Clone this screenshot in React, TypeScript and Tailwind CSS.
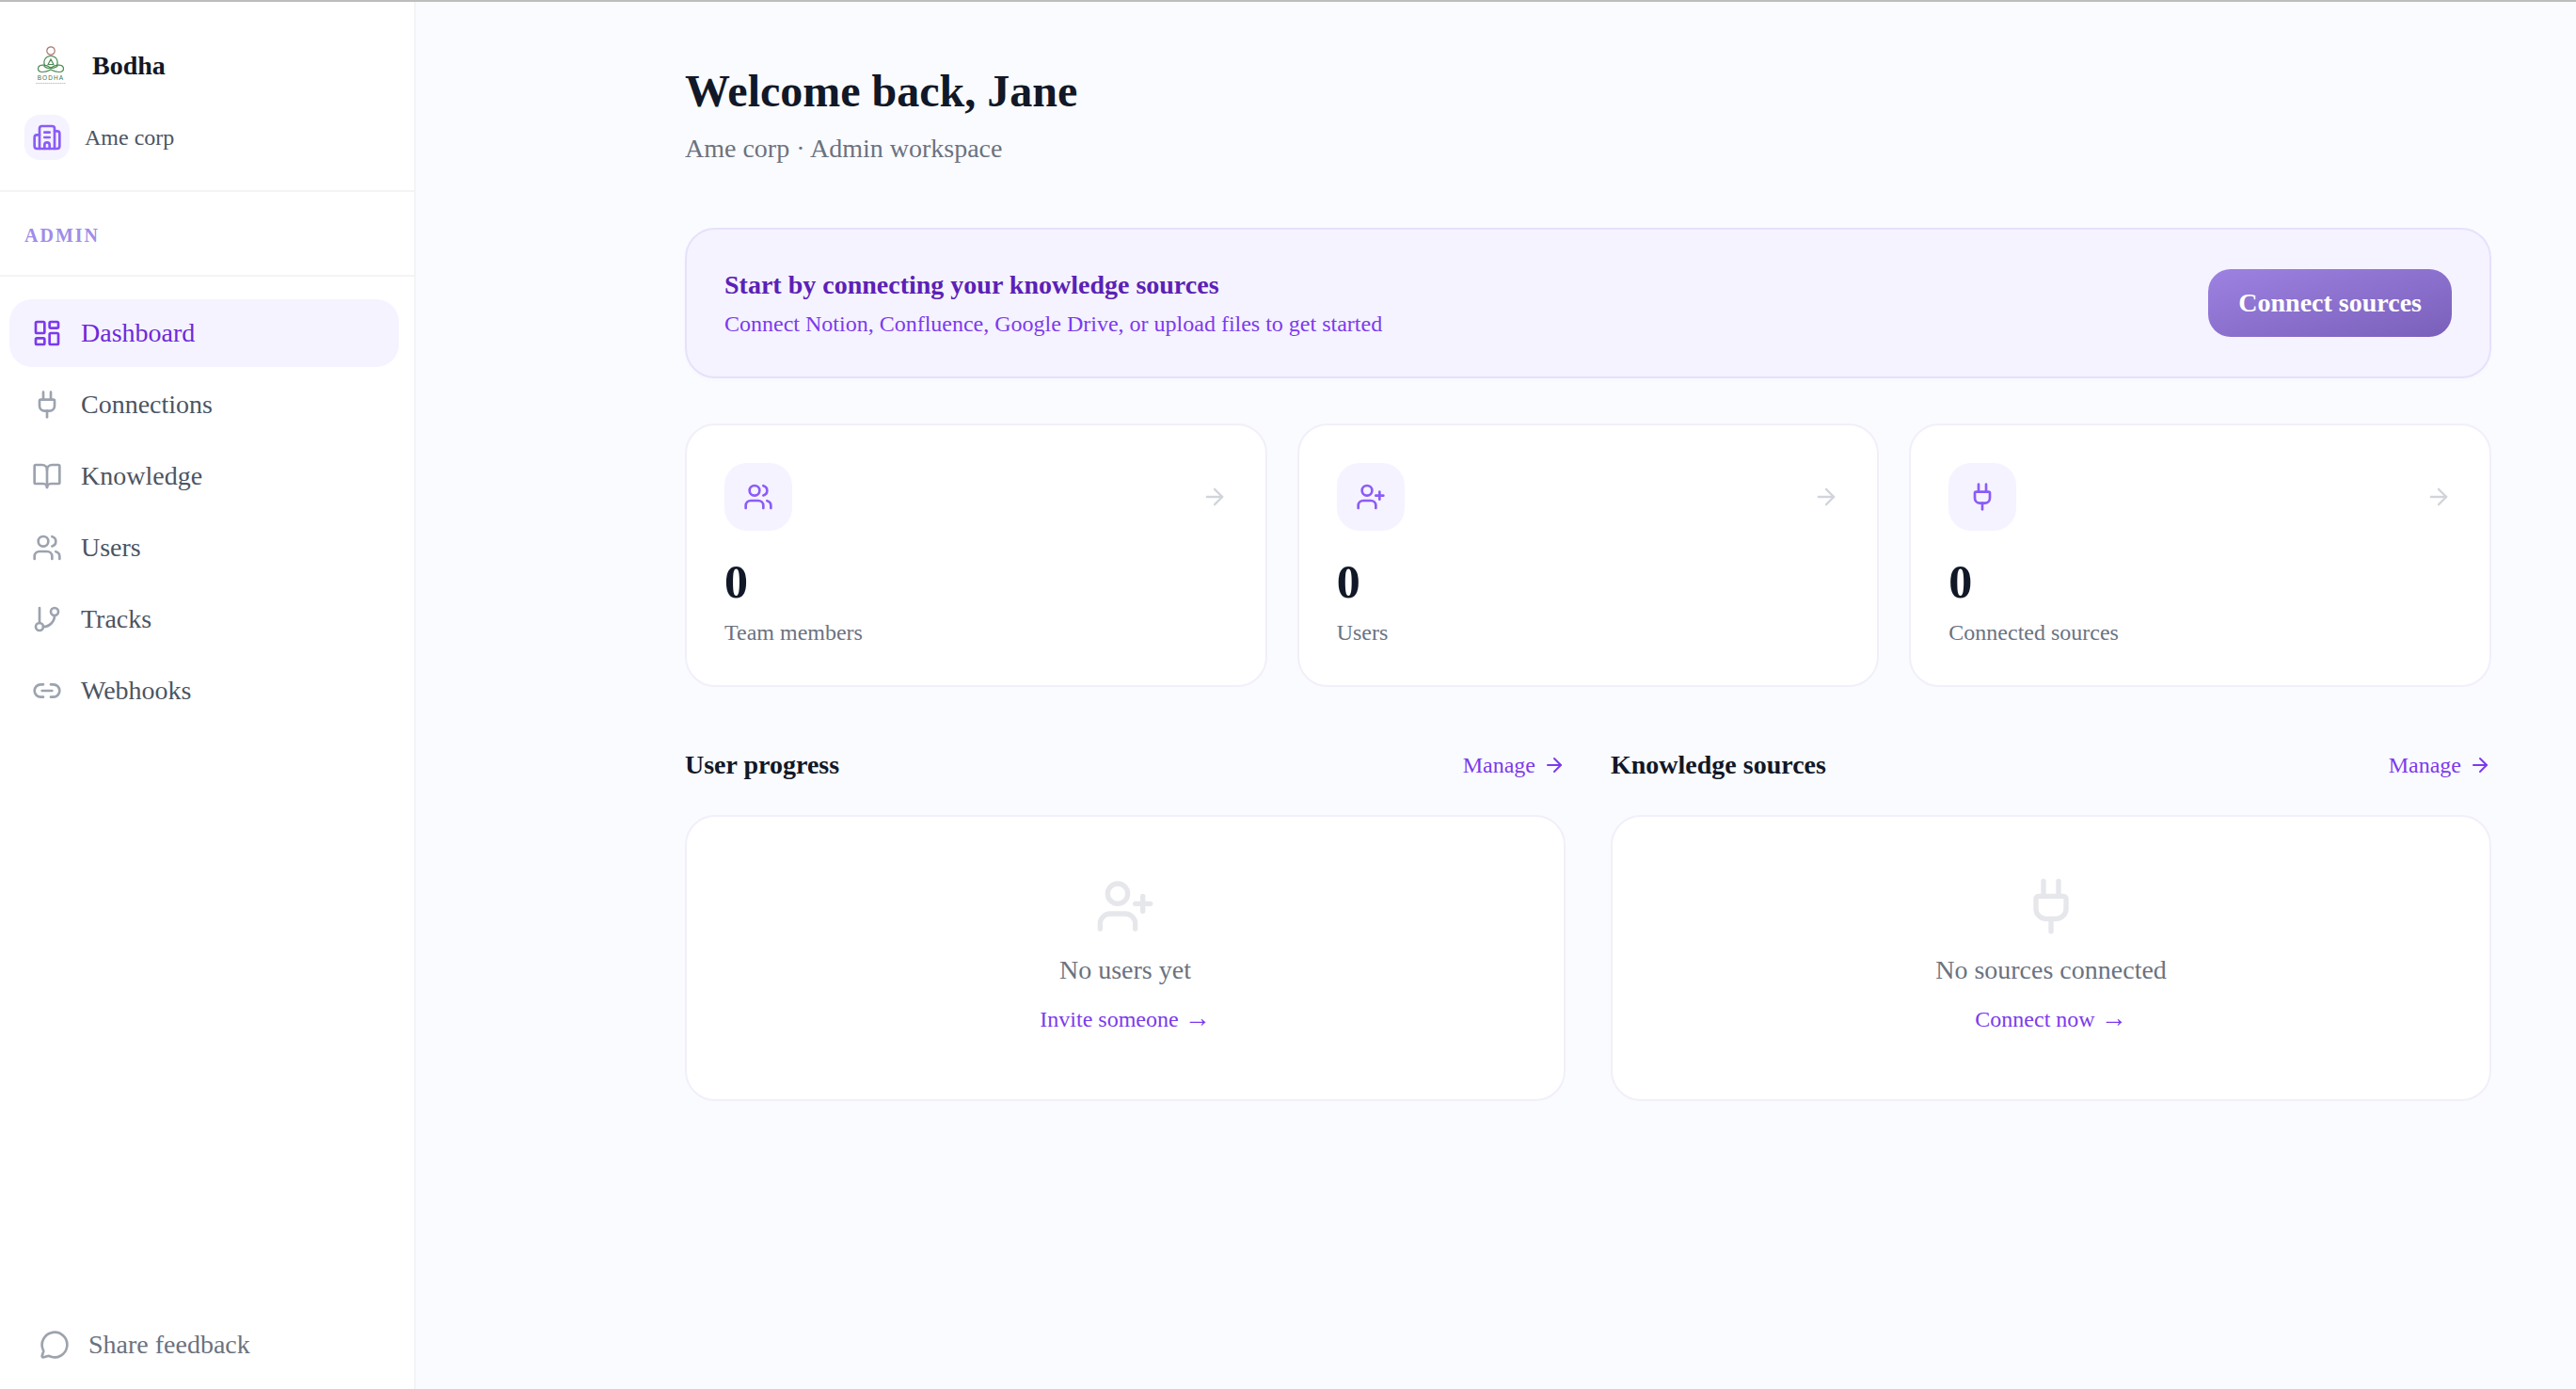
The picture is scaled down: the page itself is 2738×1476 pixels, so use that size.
import React from "react";
import {
  ArrowRight,
  BookOpen,
  Building2,
  GitBranch,
  LayoutDashboard,
  Link2,
  MessageCircle,
  Plug,
  UserPlus,
  Users,
} from "lucide-react";

const navItems = [
  { label: "Dashboard", icon: LayoutDashboard, active: true },
  { label: "Connections", icon: Plug },
  { label: "Knowledge", icon: BookOpen },
  { label: "Users", icon: Users },
  { label: "Tracks", icon: GitBranch },
  { label: "Webhooks", icon: Link2 },
];

const stats = [
  { label: "Team members", icon: Users },
  { label: "Users", icon: UserPlus },
  { label: "Connected sources", icon: Plug },
];

const panels = [
  { title: "User progress", empty: "No users yet", action: "Invite someone", icon: UserPlus },
  { title: "Knowledge sources", empty: "No sources connected", action: "Connect now", icon: Plug },
];

const BodhaLogo = () => (
  <svg width="36" height="44" viewBox="0 0 36 44" fill="none">
    <circle cx="18" cy="6" r="4.2" stroke="#a9726e" strokeWidth="1.200" />
    <g stroke="#4a8a50" strokeWidth="1.200" strokeLinecap="round">
      <path d="M11.5 21.5C9.5 15.5 13 11.5 18 11.5s8.500 4 6.500 10" />
      <path d="M15 20.500l3-5.500 3 5.500M15.500 20.500h5" />
      <path d="M18 24C12 19.500 4.500 20.500 4.500 25c0 4.500 7 4.500 13.500 1 6.500 3.500 13.500 3.500 13.500-1 0-4.500-7.500-5.500-13.500-1Z" />
      <path d="M11 22.500c3 3 9 3 14 0" />
    </g>
    <text x="18" y="37" textAnchor="middle" fontSize="6.500" letterSpacing="1.100" fill="#3f7247" fontFamily="'Liberation Sans', sans-serif">
      BODHA
    </text>
    <path d="M2 40.500h32" stroke="#9db39f" strokeWidth="0.700" strokeDasharray="1.500 0.500" />
  </svg>
);

const Sidebar = () => (
  <aside className="flex w-[442px] shrink-0 flex-col border-r-2 border-[#f3f4f6] bg-white">
    <div className="border-b-2 border-[#f3f4f6] pt-[44px] pb-[32px]">
      <div className="flex items-center gap-[20px] pl-[30px]">
        <div className="flex h-[48px] w-[48px] items-center justify-center">
          <BodhaLogo />
        </div>
        <span className="text-[28px] font-bold text-[#111827]">Bodha</span>
      </div>
      <div className="mt-[28px] flex items-center gap-[16px] pl-[26px]">
        <div className="flex h-[48px] w-[48px] items-center justify-center rounded-[16px] bg-[#f5f3ff]">
          <Building2 size={32} className="text-[#8b5cf6]" />
        </div>
        <span className="text-[24px] text-[#4b5563]">Ame corp</span>
      </div>
    </div>

    <div className="flex h-[90px] items-center border-b-2 border-[#f3f4f6] pt-[4px] pl-[26px]">
      <span className="text-[20px] font-bold tracking-[0.1em] text-[#a08ce8]">ADMIN</span>
    </div>

    <nav className="flex flex-col gap-[4px] pt-[24px] pr-[16px] pl-[10px]">
      {navItems.map((item) => (
        <div
          key={item.label}
          className={
            item.active
              ? "flex h-[72px] items-center gap-[20px] rounded-[24px] bg-[#f5f3ff] pl-[24px] text-[#6d28d9]"
              : "flex h-[72px] items-center gap-[20px] rounded-[24px] pl-[24px] text-[#4b5563]"
          }
        >
          <item.icon size={32} className={item.active ? "text-[#7c3aed]" : "text-[#9ca3af]"} />
          <span className="text-[28px]">{item.label}</span>
        </div>
      ))}
    </nav>

    <div className="mt-auto flex items-center gap-[20px] pb-[26px] pl-[42px]">
      <MessageCircle size={32} className="text-[#9ca3af]" />
      <span className="text-[28px] text-[#6b7280]">Share feedback</span>
    </div>
  </aside>
);

export default function App() {
  return (
    <div className="flex h-screen flex-col overflow-hidden bg-[#fafbfe] font-['Liberation_Serif',serif]">
      <div className="h-[2px] shrink-0 bg-[#bdbdbd]" />
      <div className="flex min-h-0 flex-1">
        <Sidebar />
        <main className="flex-1 pt-[64px] pr-[90px] pl-[286px]">
          <h1 className="text-[48px] leading-[62px] font-bold text-[#111827]">Welcome back, Jane</h1>
          <p className="mt-[9px] text-[28px] leading-[42px] text-[#6b7280]">Ame corp · Admin workspace</p>

          <section className="mt-[63px] flex h-[160px] items-center justify-between rounded-[32px] border-2 border-[#e6e1fb] bg-[#f5f3ff] px-[40px] shadow-[0_2px_4px_rgba(91,33,182,0.02)]">
            <div>
              <h2 className="text-[28px] leading-[42px] font-bold text-[#5b21b6]">Start by connecting your knowledge sources</h2>
              <p className="mt-[2px] text-[24px] leading-[36px] text-[#7c3aed]">
                Connect Notion, Confluence, Google Drive, or upload files to get started
              </p>
            </div>
            <button className="flex h-[72px] items-center rounded-[24px] bg-gradient-to-br from-[#9d82e2] to-[#7a5fba] px-[32px] text-[28px] font-bold text-white">
              Connect sources
            </button>
          </section>

          <section className="mt-[48px] grid grid-cols-3 gap-[32px]">
            {stats.map((stat) => (
              <div key={stat.label} className="h-[280px] rounded-[32px] border-2 border-[#f1effa] bg-white px-[40px] pt-[40px]">
                <div className="flex items-center justify-between">
                  <div className="flex h-[72px] w-[72px] items-center justify-center rounded-[24px] bg-[#f5f3ff]">
                    <stat.icon size={32} className="text-[#8b5cf6]" />
                  </div>
                  <ArrowRight size={28} className="text-[#d1d5db]" />
                </div>
                <div className="mt-[24px] text-[50px] leading-[60px] font-bold text-[#111827]">0</div>
                <div className="mt-[6px] text-[24px] leading-[36px] text-[#6b7280]">{stat.label}</div>
              </div>
            ))}
          </section>

          <section className="mt-[62px] grid grid-cols-2 gap-[48px]">
            {panels.map((panel) => (
              <div key={panel.title}>
                <div className="flex h-[42px] items-center justify-between">
                  <h3 className="text-[28px] font-bold text-[#111827]">{panel.title}</h3>
                  <span className="flex items-center gap-[8px] text-[24px] text-[#7c3aed]">
                    Manage
                    <ArrowRight size={24} />
                  </span>
                </div>
                <div className="mt-[32px] flex h-[304px] flex-col items-center rounded-[32px] border-2 border-[#f1effa] bg-white pt-[63px]">
                  <panel.icon size={64} className="text-[#e5e7eb]" />
                  <p className="mt-[15px] text-[28px] leading-[42px] text-[#6b7280]">{panel.empty}</p>
                  <span className="mt-[13px] text-[24px] leading-[36px] text-[#7c3aed]">
                    {panel.action} <span className="text-[28px] leading-none">→</span>
                  </span>
                </div>
              </div>
            ))}
          </section>
        </main>
      </div>
    </div>
  );
}
